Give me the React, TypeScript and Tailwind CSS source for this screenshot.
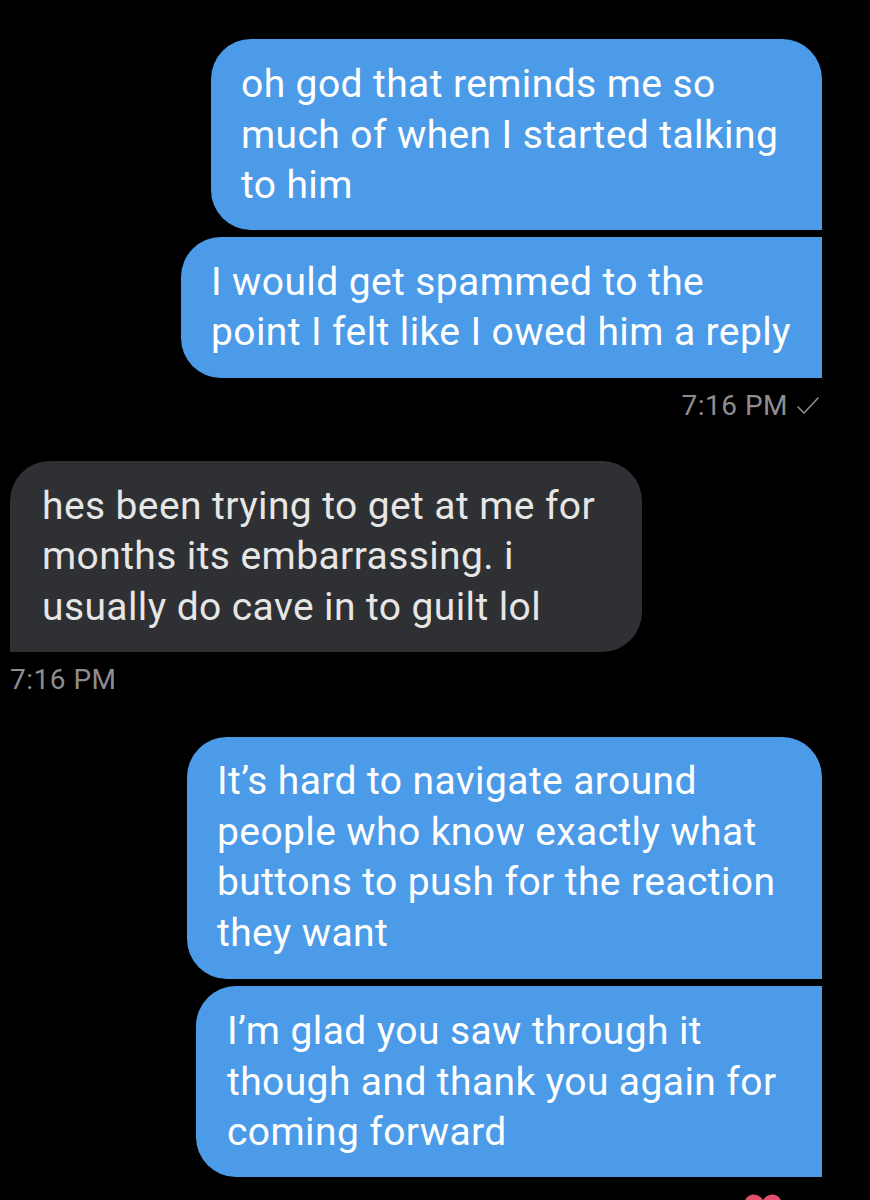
import React from 'react'

type Msg = {
  lines: string[]
  width: string
  pad: string
  corners: string
}

function Bubble({ lines, width, pad, corners, dark }: Msg & { dark?: boolean }) {
  return (
    <div
      className={`${width} ${pad} ${corners} text-[39px] leading-[50.5px] tracking-[0.4px] ${
        dark ? 'bg-[#2e3033] text-[#e6e6e6]' : 'bg-[#4c9be8] text-white'
      }`}
    >
      {lines.map((l) => (
        <div key={l} className="whitespace-nowrap">
          {l}
        </div>
      ))}
    </div>
  )
}

function Heart() {
  return (
    <svg width="42" height="38" viewBox="0 0 24 22" className="mr-[38px] mt-[7px]">
      <path
        d="M12 21s-8.5-5.4-10.6-10.3C-0.2 6.6 2.5 2 6.6 2c2.3 0 4.1 1.3 5.4 3.2C13.3 3.3 15.1 2 17.4 2c4.1 0 6.8 4.6 5.2 8.7C20.5 15.6 12 21 12 21z"
        fill="#e2506d"
      />
    </svg>
  )
}

export default function App() {
  return (
    <div
      className="h-[1200px] bg-black pt-[39px] overflow-hidden"
      style={{ fontFamily: 'Roboto, "Liberation Sans", sans-serif' }}
    >
      {/* outgoing */}
      <div className="flex flex-col items-end gap-[7px] pr-[48px]">
        <Bubble
          lines={['oh god that reminds me so', 'much of when I started talking', 'to him']}
          width="w-[611px]"
          pad="pl-[30px] pt-[20px] pb-[19px]"
          corners="rounded-[40px] rounded-br-none"
        />
        <Bubble
          lines={['I would get spammed to the', 'point I felt like I owed him a reply']}
          width="w-[641px]"
          pad="pl-[30px] pt-[20px] pb-[20px]"
          corners="rounded-l-[40px]"
        />
      </div>
      <div className="flex items-center justify-end gap-[8px] pr-[50px] pt-[13px] text-[28px] leading-[30px] tracking-[0.5px] text-[#8d8d92]">
        <span>7:16 PM</span>
        <svg width="24" height="20" viewBox="0 0 24 20" fill="none">
          <path d="M2 11l6 6L22 2" stroke="#8d8d92" strokeWidth="1.6" strokeLinecap="round" strokeLinejoin="round" />
        </svg>
      </div>

      {/* incoming */}
      <div className="pl-[10px] pt-[40px]">
        <Bubble
          lines={['hes been trying to get at me for', 'months its embarrassing. i', 'usually do cave in to guilt lol']}
          width="w-[632px]"
          pad="pl-[32px] pt-[20px] pb-[20px]"
          corners="rounded-[40px] rounded-bl-none"
          dark
        />
        <div className="pt-[13px] text-[28px] leading-[30px] tracking-[0.5px] text-[#8d8d92]">7:16 PM</div>
      </div>

      {/* outgoing */}
      <div className="flex flex-col items-end gap-[7px] pr-[48px] pt-[42px]">
        <Bubble
          lines={[
            'It\u2019s hard to navigate around',
            'people who know exactly what',
            'buttons to push for the reaction',
            'they want',
          ]}
          width="w-[635px]"
          pad="pl-[30px] pt-[19px] pb-[21px]"
          corners="rounded-[40px] rounded-br-none"
        />
        <Bubble
          lines={['I\u2019m glad you saw through it', 'though and thank you again for', 'coming forward']}
          width="w-[626px]"
          pad="pl-[31px] pt-[20px] pb-[19px]"
          corners="rounded-l-[40px]"
        />
        <Heart />
      </div>
    </div>
  )
}
